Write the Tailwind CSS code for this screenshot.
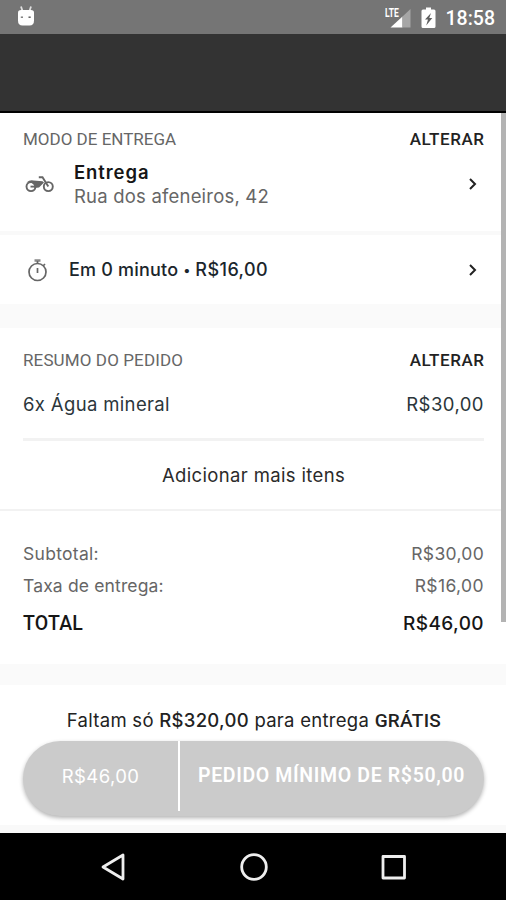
<!DOCTYPE html>
<html lang="pt-BR">
<head>
<meta charset="utf-8">
<meta name="viewport" content="width=device-width, initial-scale=1">
<title>Resumo do pedido</title>
<script src="https://cdn.jsdelivr.net/npm/@tailwindcss/browser@4"></script>
</head>
<body class="relative flex h-[900px] w-[506px] flex-col overflow-hidden bg-white font-['Inter',sans-serif] whitespace-nowrap">

  <!-- Status bar -->
  <div class="flex h-[34px] shrink-0 items-center bg-[#757575] pt-0.5 pr-[11px] pl-4 text-white">
    <svg class="-mt-1 h-[22px] w-5" viewBox="0 0 20 22" fill="#fff">
      <path d="M5 1.500 6.500 6M15 1.500 13.500 6" stroke="#e0e0e0" stroke-width="1.800" fill="none"/>
      <path d="M2 7.500Q2 5 5 5H15Q18 5 18 7.500V15.500Q18 20.500 13.500 20.500H6.500Q2 20.500 2 15.500Z"/>
      <rect x="4.800" y="11.500" width="2.200" height="1.400" fill="#777"/><rect x="12.500" y="11.500" width="2.200" height="1.400" fill="#555"/>
    </svg>
    <div class="ml-auto flex items-center">
      <div class="relative h-[22px] w-[26px]">
        <span class="absolute -top-[2px] left-0 origin-left scale-x-[0.68] font-['Roboto',sans-serif] text-[12.500px] leading-[15px] font-bold">LTE</span>
        <svg class="h-[22px] w-[26px]" viewBox="0 0 26 22"><path d="M5.500 20.500 17.500 9.500V20.500Z" fill="#fff"/><path d="M17.500 9.500 25.500 2V20.500H17.500Z" fill="#a6a6a6"/></svg>
      </div>
      <svg class="ml-[10px] h-[22px] w-[15px]" viewBox="0 0 15 22"><path d="M5 .5H10V2.500H13Q14.500 2.500 14.500 4V19.500Q14.500 21 13 21H2Q.5 21 .5 19.500V4Q.5 2.500 2 2.500H5Z" fill="#fff"/><path d="M10 6 4 12.500H7L5.200 18.500 11.300 11H8.300Z" fill="#606060"/></svg>
      <span class="ml-[10px] pt-0.5 font-['Roboto',sans-serif] text-[19.500px] leading-[24px] font-medium">18:58</span>
    </div>
  </div>

  <!-- App header -->
  <div class="h-[79px] shrink-0 border-b-2 border-black bg-[#333]"></div>

  <!-- Delivery mode -->
  <section class="h-[118px] shrink-0 px-[23px] pt-[14px]">
    <div class="flex h-6 items-center justify-between font-['Roboto',sans-serif] text-[17px] leading-6">
      <h2 class="text-[#666]">MODO DE ENTREGA</h2>
      <button class="-mr-[1.500px] font-medium tracking-[0.550px] text-[#222]">ALTERAR</button>
    </div>
    <div class="mt-[9px] flex h-12 items-center">
      <svg class="mt-1 h-5 w-[31px]" viewBox="0 0 31 20" fill="none" stroke="#666" stroke-width="1.900">
        <circle cx="8" cy="10.600" r="4.500"/><circle cx="25.300" cy="10.600" r="4.500"/>
        <path d="M15.800 1.200H19.500L25.300 10.600"/>
        <path d="M3.500 6.500Q7 3.600 10.500 4.600L19.500 5.200 21 6.500 16 11.500 11.500 12 11 9 8 6.300Z" fill="#666" stroke="none"/>
        <path d="M7.500 10.600H12"/>
      </svg>
      <div class="ml-5 text-[18.500px] leading-6">
        <div class="font-semibold tracking-[0.900px] text-[#161616]">Entrega</div>
        <div class="tracking-[0.200px] text-[#666]">Rua dos afeneiros, 42</div>
      </div>
      <svg class="mr-[6px] ml-auto h-3 w-2" viewBox="0 0 8 12" fill="none" stroke="#222" stroke-width="2"><path d="M1 1 6 6 1 11"/></svg>
    </div>
  </section>

  <!-- Delivery time -->
  <section class="flex h-[73px] shrink-0 items-center border-t-4 border-[#f9f9f9] px-[23px]">
    <svg class="ml-1 h-6 w-[22px]" viewBox="0 0 22 24" fill="none" stroke="#666" stroke-width="1.700">
      <circle cx="10.500" cy="14" r="8.500"/><path d="M7.500 2.500H13.500" stroke="#888" stroke-width="2.500"/><path d="M10.500 3V5M16 8 18 6"/><path d="M10.500 10V15"/>
    </svg>
    <span class="ml-[20px] text-[18px] leading-6 font-medium tracking-[0.200px] text-[#1b262c]">Em 0 minuto <span class="inline-block w-[7px] scale-75 -indent-px">•</span> <span class="tracking-[0.450px]">R$16,00</span></span>
    <svg class="mt-px mr-[6px] ml-auto h-3 w-2" viewBox="0 0 8 12" fill="none" stroke="#222" stroke-width="2"><path d="M1 1 6 6 1 11"/></svg>
  </section>

  <div class="h-6 shrink-0 bg-[#fafafa]"></div>

  <!-- Order summary -->
  <section class="h-[183px] shrink-0 border-b-2 border-[#f2f2f2] pt-5 pr-[22px] pl-[23px]">
    <div class="flex h-6 items-center justify-between font-['Roboto',sans-serif] text-[17px] leading-6">
      <h2 class="tracking-[0.120px] text-[#666]">RESUMO DO PEDIDO</h2>
      <button class="-mr-[0.500px] font-medium tracking-[0.550px] text-[#222]">ALTERAR</button>
    </div>
    <div class="mt-5 flex h-[49px] justify-between border-b-[3px] border-[#f2f2f2] text-[18.500px] leading-[25px] text-[#2b363b]">
      <span class="tracking-[0.350px]">6x Água mineral</span><span class="tracking-[0.450px]">R$30,00</span>
    </div>
    <button class="mt-[21px] block w-full text-center text-[18.500px] leading-[26px] tracking-[0.350px] text-[#2b2b2b]">Adicionar mais itens</button>
  </section>

  <!-- Totals -->
  <section class="flex h-[153px] shrink-0 flex-col pt-[30px] pr-[22px] pl-[23px] text-[17.500px] leading-[26px] text-[#666]">
    <div class="flex justify-between tracking-[0.300px]"><span>Subtotal:</span><span>R$30,00</span></div>
    <div class="mt-1.5 flex justify-between"><span class="tracking-[0.150px]">Taxa de entrega:</span><span class="tracking-[0.400px]">R$16,00</span></div>
    <div class="mt-[12px] flex justify-between text-[19px] font-medium text-[#161616]"><span class="font-['Roboto',sans-serif] text-[19.500px] tracking-[0.200px]">TOTAL</span><span class="tracking-[0.400px]">R$46,00</span></div>
  </section>

  <div class="h-[21px] shrink-0 bg-[#fafafa]"></div>

  <!-- Checkout -->
  <section class="h-[148px] shrink-0 border-b-8 border-[#f9f9f9] px-[23px] pt-[22px]">
    <p class="pl-0.5 text-center text-[18.500px] leading-[26px] tracking-[0.280px] text-[#222]">Faltam só <b class="font-medium">R$320,00</b> para entrega <b class="font-['Roboto',sans-serif] text-[19px] font-medium">GRÁTIS</b></p>
    <button class="mt-[7px] flex h-[75px] w-[461px] rounded-full bg-[#cbcbcb] text-[18.500px] leading-[70px] text-white shadow-[0_2px_4px_rgba(0,0,0,0.3)]">
      <span class="h-[70px] w-[157px] border-r-2 border-white tracking-[0.400px]">R$46,00</span>
      <span class="flex-1 pr-px font-['Roboto',sans-serif] text-[19.500px] font-semibold tracking-[0.650px]">PEDIDO MÍNIMO DE R$50,00</span>
    </button>
  </section>

  <!-- Navigation bar -->
  <nav class="flex h-[67px] shrink-0 items-center justify-between bg-black pr-[98px] pl-[99px]">
    <svg class="h-[30px] w-[30px]" viewBox="0 0 30 30" fill="none" stroke="#eee" stroke-width="2.800" stroke-linejoin="round"><path d="M24 3V27L4 15Z"/></svg>
    <svg class="h-[30px] w-[30px]" viewBox="0 0 30 30" fill="none" stroke="#eee" stroke-width="2.800"><circle cx="15" cy="15" r="12.300"/></svg>
    <svg class="h-[30px] w-[30px]" viewBox="0 0 30 30" fill="none" stroke="#eee" stroke-width="2.800" stroke-linejoin="round"><rect x="5" y="4.500" width="21.500" height="21.500"/></svg>
  </nav>

  <!-- Scroll indicator -->
  <div class="absolute top-[113px] right-0 h-[509px] w-[5px] bg-[#b3b3b3]"></div>
</body>
</html>
